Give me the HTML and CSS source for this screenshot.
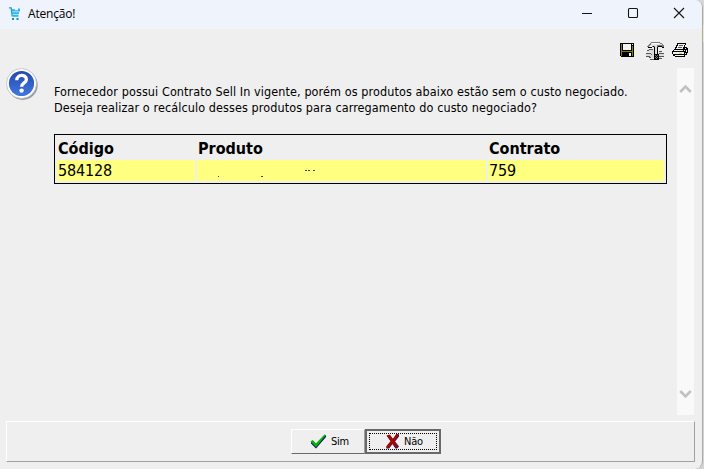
FILE: index.html
```html
<!DOCTYPE html>
<html lang="pt-BR">
<head>
<meta charset="utf-8">
<title>Atenção!</title>
<link rel="stylesheet" href="styles.css">
</head>
<body>
<div class="window">
  <header class="titlebar">
    <svg class="app-icon" width="12" height="14" viewBox="0 0 12 14"><path d="M0 .8H2.2L3.2 9.5" fill="none" stroke="#209bd0" stroke-width="1.3"/><path d="M3 2.2H6V3.2H9V1.5H11V4.5H3zM3 5.2H10V7H3zM3.5 7.8H9.5V9.8H3.5z" fill="#29b5ed"/><path d="M3 11H5V13H3zM7.5 11H9.5V13H7.5z" fill="#168fc4"/></svg>
    <h1 class="caption">Atenção!</h1>
    <div class="controls">
      <svg width="12" height="12" viewBox="0 0 12 12"><path d="M1 6.5H11" /></svg>
      <svg width="12" height="12" viewBox="0 0 12 12"><rect x="1.5" y="1.5" width="9" height="9" rx="1"/></svg>
      <svg width="12" height="12" viewBox="0 0 12 12"><path d="M1 1L11 11M11 1L1 11"/></svg>
    </div>
  </header>
  <div class="toolbar">
    <svg class="save" width="14" height="14" viewBox="0 0 14 14" shape-rendering="crispEdges"><path d="M0 0H14V14H1L0 13z" fill="#000"/><path d="M1 1H2V8H12V3H13V13H12V9H2V13H1z" fill="#808000"/><path d="M3 1H11V7H3zM12 1H13V2H12z" fill="#f4f4f4"/><path d="M9 10H11V13H9z" fill="#eee"/></svg>
    <svg class="tools" width="19" height="19" viewBox="0 0 19 19" shape-rendering="crispEdges"><path d="M2 7H8V11H13V9H15V12H18V14H15V16H4V14H0V12H5V10H1V8H2z" fill="#dadada"/><path d="M3 7H7V8H3zM1 8H3V9H1zM0 11H5V12H0zM5 12H6V13H5zM0 14H4V15H0zM3 15H5V16H3zM4 17H8V18H4zM13 9H16V10H13zM13 11H18V12H13zM13 14H18V15H13zM13 16H16V17H13z" fill="#555"/><path d="M5 0H14V1H16V2H17V3H18V6H17V5H16V4H12V6H8V5H6V6H2V5H1V4H2V3H3V2H4V1H5z" fill="#777"/><path d="M5 1H14V2H16V3H11V5H9V4H6V5H3V4H4V3H5z" fill="#e2e2e2"/><path d="M6 1H13V2H6zM4 4H6V5H4z" fill="#fff"/><path d="M2 5H6V6H2zM7 4H8V5H7zM12 4H16V5H12zM16 5H18V6H16zM8 5H9V12H8zM11 5H12V12H11z" fill="#000"/><path d="M9 5H11V12H9z" fill="#ddd"/><path d="M8 12H13V18H8z" fill="#000"/><path d="M9 13h1v1h1v1h-1v1h-1v-1h1v-1h-1zM11 13h1v1h-1zM11 15h1v1h-1zM10 16h1v1h-1z" fill="#777"/></svg>
    <svg class="print" width="17" height="15" viewBox="0 0 17 15" shape-rendering="crispEdges"><path d="M5 0H14V2H13V4H15V5H16V10H15V12H13V14H3V13H1V11H0V8H1V7H2V6H3V4H4V2H5z" fill="#000"/><path d="M6 1H13V2H12V4H11V6H4V5H5V3H6zM3 7H11V8H2V7zM1 9H12V11H1zM3 12H12V13H3zM13 5H14V6H13zM12 7H13V8H12zM14 7H15V9H14zM13 10H14V11H13z" fill="#f2f2f2"/><path d="M7 2H11V3H7zM6 4H10V5H6z" fill="#555"/><path d="M7 10H10V11H7z" fill="#e0d820"/></svg>
  </div>
  <main class="content">
    <svg class="question" width="34" height="34" viewBox="0 0 34 34"><defs><linearGradient id="blue" x2="0" y2="1"><stop stop-color="#2449ad"/><stop offset="1" stop-color="#4078e0"/></linearGradient></defs><circle cx="16.7" cy="17" r="15" fill="#777" opacity=".7"/><circle cx="15.5" cy="15.5" r="15" fill="#fff" stroke="#b6bccb" stroke-width=".8"/><circle cx="15.5" cy="15.5" r="12.6" fill="url(#blue)"/><path d="M10.8 12.2C10.8 5.9 20.4 6 20.4 11.5C20.4 15 15.6 14.8 15.6 18.8" fill="none" stroke="#fff" stroke-width="3.3"/><circle cx="15.6" cy="22.6" r="2.2" fill="#fff"/></svg>
    <div class="message">
      <p>Fornecedor possui Contrato Sell In vigente, porém os produtos abaixo estão sem o custo negociado.<br>Deseja realizar o recálculo desses produtos para carregamento do custo negociado?</p>
      <table>
        <thead><tr><th class="code">Código</th><th class="product">Produto</th><th>Contrato</th></tr></thead>
        <tbody><tr><td>584128</td><td><svg class="marks" width="120" height="14" viewBox="0 0 120 14" shape-rendering="crispEdges"><path d="M20 12h1v1h-1zM63 12h2v1h-2zM107 6h2v1h-2zM110 6h2v1h-2zM115 6h2v1h-2z" fill="#444"/></svg></td><td>759</td></tr></tbody>
      </table>
    </div>
    <div class="scrollbar">
      <svg width="13" height="10" viewBox="0 0 13 10"><path d="M1.2 8L6.5 2.7L11.8 8"/></svg>
      <svg width="13" height="10" viewBox="0 0 13 10"><path d="M1.2 2L6.5 7.3L11.8 2"/></svg>
    </div>
  </main>
  <footer class="actions">
    <button class="yes"><svg width="17" height="15" viewBox="0 0 17 15"><path d="M1 8L3 6.5L6 10L14.5 1L16 1.5V3L6 14.5L1 9.5z" fill="#101060"/><path d="M.5 7.5L2.5 6L5.8 9.5L14.5 .5L16 1L6 13.2z" fill="#08b808"/></svg><span>Sim</span></button><button class="no"><svg width="14" height="15" viewBox="0 0 14 15"><path d="M1 2L4 1L7 5L10.5 .5H13V2.5L9 7.5L13 12.5L11 14.5H9.5L6.5 10L3 14.5H.5V12.5L5 7.5z" fill="#141450"/><path d="M.5 1.5L3.5 .5L6.8 5L10.3 0H12.5V2L8.5 7.2L12 12L10 14L6.3 9.7L2.5 14H.5V12L4.5 7.2z" fill="#a00808"/></svg><span>Não</span></button>
  </footer>
</div>
</body>
</html>
```
FILE: styles.css
```css
* { box-sizing: border-box; }
html, body { margin: 0; height: 100%; overflow: hidden; }
body {
  background: linear-gradient(#d8d8d8 0 25px, #ececcb 25px 42px, #d4d4d4 42px);
  font-family: "DejaVu Sans Condensed", "DejaVu Sans", sans-serif;
  font-stretch: condensed;
  color: #000;
}
svg { display: block; flex: none; }
.window {
  width: 703px;
  height: 469px;
  display: flex;
  flex-direction: column;
  background: #efefef;
  border-right: 1px solid #aaa;
  border-radius: 0 8px 8px 0;
  overflow: hidden;
}
.titlebar {
  height: 29px;
  flex: none;
  display: flex;
  align-items: flex-start;
  background: #eff3fb;
  padding: 7px 17px 0 9px;
}
.caption {
  margin: -1px 0 0 7px;
  font: 12px/16px "Open Sans", sans-serif;
  letter-spacing: -.2px;
}
.controls { display: flex; gap: 34px; margin-left: auto; }
.controls svg { fill: none; stroke: #151515; stroke-width: 1.1; }
.toolbar {
  height: 39px;
  flex: none;
  display: flex;
  justify-content: flex-end;
  align-items: flex-start;
  padding: 13px 13px 0 0;
}
.save { margin: 1px 12px 0 0; }
.tools { margin-right: 7px; }
.print { margin-top: 1px; }
.content { height: 347px; flex: none; display: flex; padding-left: 6px; }
.question { margin-right: 14px; }
.message { width: 613px; padding-top: 16px; }
p { margin: 0; font-size: 12.5px; line-height: 16px; letter-spacing: .095px; white-space: nowrap; }
table {
  width: 613px;
  height: 50px;
  margin-top: 18px;
  border: 1px solid #000;
  border-spacing: 2px;
  table-layout: fixed;
  font-size: 16px;
  line-height: 21px;
}
th, td { padding: 0 1px; height: 21px; text-align: left; }
th { line-height: 19px; padding-top: 2px; }
td { background: #ffff80; letter-spacing: -.15px; }
.code { width: 138px; }
.product { width: 289px; }
.scrollbar {
  width: 17px;
  margin-left: 10px;
  padding: 16px 2px;
  display: flex;
  flex-direction: column;
  justify-content: space-between;
  background: #f9f9f9;
}
.scrollbar path { fill: none; stroke: #c1c1c1; stroke-width: 2.6; }
.actions {
  height: 41px;
  width: 689px;
  margin: 6px 0 0 6px;
  display: flex;
  align-items: flex-start;
  padding: 7px 0 0 284px;
  border: 1px solid;
  border-color: #fff #a0a0a0 #a0a0a0 #fff;
}
button {
  height: 25px;
  display: flex;
  align-items: center;
  padding: 0;
  font: condensed 11px/14px "DejaVu Sans Condensed", "DejaVu Sans", sans-serif;
  letter-spacing: -.25px;
  color: #000;
  background: #efefef;
}
button span { padding-top: 1px; }
.yes {
  width: 74px;
  padding-left: 18px;
  gap: 4px;
  border: 1px solid;
  border-color: #fff #a0a0a0 #696969 #fff;
}
.no {
  position: relative;
  width: 76px;
  padding-left: 19px;
  gap: 4px;
  border: 2px solid #696969;
}
.no::after {
  content: "";
  position: absolute;
  inset: 2px;
  border: 1px dotted #000;
}
```
